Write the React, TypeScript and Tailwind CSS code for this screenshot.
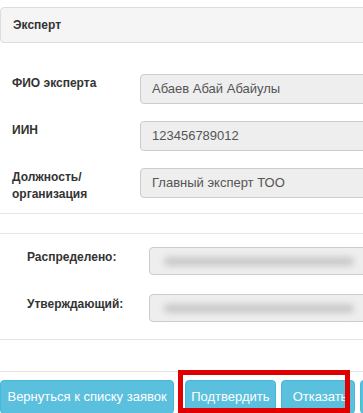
import React from 'react';

interface Field {
  label: string[];
  value: string;
}

const expertFields: Field[] = [
  { label: ['ФИО эксперта'], value: 'Абаев Абай Абайулы' },
  { label: ['ИИН'], value: '123456789012' },
  { label: ['Должность/', 'организация'], value: 'Главный эксперт ТОО' },
];

const App: React.FC = () => {
  return (
    <div
      className="relative w-[363px] h-[413px] overflow-hidden bg-white text-[#333]"
      style={{ fontFamily: '"Liberation Sans", Arial, sans-serif' }}
    >
      <div className="w-[420px] pt-[7px]">
        {/* panel heading */}
        <div className="h-[36px] flex items-center pl-[12px] bg-[#f5f5f5] border border-[#dddddd] rounded-l-[4px] text-[12px] font-bold">
          Эксперт
        </div>

        {/* expert fields */}
        <div className="mt-[31px] flex flex-col gap-[17px]">
          {expertFields.map((field) => (
            <div key={field.value} className="flex h-[30px]">
              <div className="w-[140px] pl-[12px] pt-[1px] text-[12px] font-bold leading-[17px]">
                {field.label.map((line) => (
                  <div key={line}>{line}</div>
                ))}
              </div>
              <div className="flex-1 h-[30px] flex items-center pl-[11px] bg-[#eeeeee] border border-[#cccccc] rounded-[4px] text-[13px] text-[#555]">
                {field.value}
              </div>
            </div>
          ))}
        </div>

        <div className="mt-[15px] border-t border-[#e5e5e5]" />
        <div className="mt-[19px] border-t border-[#e5e5e5]" />

        {/* assignment */}
        <div className="mt-[13px] flex flex-col gap-[19px]">
          {['Распределено:', 'Утверждающий:'].map((label) => (
            <div key={label} className="flex">
              <div className="w-[149px] pl-[27px] pt-[2px] text-[12px] font-bold leading-[17px]">
                {label}
              </div>
              <div className="flex-1 h-[28px] flex items-center pl-[14px] bg-[#eeeeee] border border-[#cccccc] rounded-[4px]">
                <div className="w-[190px] h-[9px] rounded-full bg-[#c9c9c9] blur-[3px]" />
              </div>
            </div>
          ))}
        </div>

        <div className="mt-[17px] border-t border-[#e5e5e5]" />
        <div className="mt-[31px] border-t border-[#e5e5e5]" />

        {/* actions */}
        <div className="mt-[8px] flex text-[13px] text-white">
          <button className="w-[175px] h-[34px] bg-[#5bc0de] border border-[#46b8da] rounded-[4px]">
            Вернуться к списку заявок
          </button>
          <button className="ml-[11px] w-[91px] h-[34px] bg-[#5bc0de] border border-[#46b8da] rounded-[4px]">
            Подтвердить
          </button>
          <button className="ml-[5px] w-[75px] h-[34px] pl-[11px] text-left bg-[#5bc0de] border border-[#46b8da] rounded-[4px] overflow-hidden whitespace-nowrap">
            Отказать
          </button>
          <button className="ml-[5px] w-[60px] h-[34px] bg-[#5bc0de] border border-[#46b8da] rounded-[4px]" />
        </div>
      </div>

      {/* highlight */}
      <div className="absolute left-[178px] top-[370px] w-[172px] h-[43px] border-[5px] border-[#e00000]" />
    </div>
  );
};

export default App;
